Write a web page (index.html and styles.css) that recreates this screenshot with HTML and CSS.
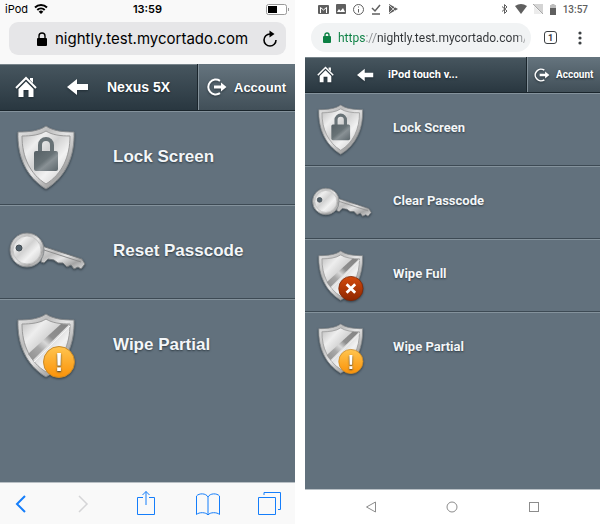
FILE: index.html
```html
<!DOCTYPE html>
<html lang="en">
<head>
    <meta charset="utf-8">
    <title>Device Actions</title>
    <link rel="stylesheet" href="styles.css">
</head>
<body>
    <!-- Shared icons -->
    <svg class="sprite" aria-hidden="true">
        <defs>
            <linearGradient id="rim" x1="0" y1="0" x2="1" y2="1">
                <stop offset="0" stop-color="#e8e8e8"/>
                <stop offset="0.3" stop-color="#bdbdbd"/>
                <stop offset="0.5" stop-color="#e6e6e6"/>
                <stop offset="0.75" stop-color="#a5a5a5"/>
                <stop offset="1" stop-color="#e0e0e0"/>
            </linearGradient>
            <linearGradient id="steel" x1="0" y1="0" x2="1" y2="1">
                <stop offset="0" stop-color="#bcbcbc"/>
                <stop offset="0.25" stop-color="#eeeeee"/>
                <stop offset="0.45" stop-color="#d2d2d2"/>
                <stop offset="0.65" stop-color="#f2f2f2"/>
                <stop offset="1" stop-color="#c4c4c4"/>
            </linearGradient>
            <linearGradient id="slash" x1="1" y1="0" x2="0" y2="1">
                <stop offset="0" stop-color="#858585"/>
                <stop offset="0.4" stop-color="#8f8f8f"/>
                <stop offset="0.55" stop-color="#d8d8d8"/>
                <stop offset="0.7" stop-color="#a8a8a8"/>
                <stop offset="1" stop-color="#8f8f8f"/>
            </linearGradient>
            <linearGradient id="padlock" x1="0" y1="0" x2="1" y2="1">
                <stop offset="0" stop-color="#566065"/>
                <stop offset="0.45" stop-color="#687276"/>
                <stop offset="0.6" stop-color="#899195"/>
                <stop offset="1" stop-color="#5c666b"/>
            </linearGradient>
            <linearGradient id="orange" x1="0" y1="0" x2="0" y2="1">
                <stop offset="0" stop-color="#ffc550"/>
                <stop offset="1" stop-color="#fb9208"/>
            </linearGradient>
            <linearGradient id="red" x1="0" y1="0" x2="0" y2="1">
                <stop offset="0" stop-color="#d34b0c"/>
                <stop offset="1" stop-color="#8e2600"/>
            </linearGradient>
        </defs>

        <symbol id="shield" viewBox="0 0 78 66">
            <path d="M38 1C31 6 21 7 10 7C9 31 18 52 38 64C58 52 67 31 66 7C55 7 45 6 38 1Z" fill="url(#rim)" stroke="#85898c"/>
            <path d="M38 6C32 10 23 11 14 11C14 32 22 49 38 59C54 49 62 32 62 11C53 11 44 10 38 6Z" fill="url(#steel)" stroke="#9a9a9a"/>
        </symbol>

        <symbol id="lock" viewBox="0 0 78 66">
            <use href="#shield"/>
            <path d="M32 27V20a6 6 0 0 1 12 0v7" fill="none" stroke="#687276" stroke-width="4"/>
            <rect x="26" y="26" width="24" height="20" rx="2" fill="url(#padlock)"/>
        </symbol>

        <symbol id="wipe" viewBox="0 0 78 66">
            <use href="#shield"/>
            <path d="M53 11L61 11.500L25 47L20 41Z" fill="url(#slash)"/>
            <path d="M62 13L26 49" stroke="#f4f4f4" fill="none"/>
        </symbol>

        <symbol id="wipe-partial" viewBox="0 0 78 66">
            <use href="#wipe"/>
            <circle cx="51" cy="49" r="15.500" fill="url(#orange)" stroke="#c98a2a"/>
        </symbol>

        <symbol id="wipe-full" viewBox="0 0 78 66">
            <use href="#wipe"/>
            <circle cx="51" cy="49" r="15.500" fill="url(#red)" stroke="#7c2808"/>
            <path d="M45.500 43.500L56.500 54.500M56.500 43.500L45.500 54.500" stroke="#ffffff" stroke-width="3.500" fill="none"/>
        </symbol>

        <symbol id="key" viewBox="0 0 78 66">
            <path d="M34 27L74 40L77 45L73 50L70 48L66 50L63 46L59 48L55 44L50 44L46 41L40 40L36 44L33 43Z" fill="url(#rim)" stroke="#74797c"/>
            <path d="M36 31L73 43" stroke="#8d8d8d" fill="none"/>
            <circle cx="19" cy="31" r="17" fill="url(#rim)" stroke="#85898c"/>
            <circle cx="19" cy="31" r="14" fill="url(#steel)" stroke="#c4c4c4"/>
            <circle cx="11" cy="29" r="3" fill="#52616c" stroke="#444d53"/>
        </symbol>

        <symbol id="home" viewBox="0 0 22 22">
            <path d="M1 12L11 2L21 12" fill="none" stroke="#ffffff" stroke-width="2"/>
            <path d="M15 2h3v5l-3-3z" fill="#ffffff"/>
            <path d="M11 5.500L18.500 13V21H13.500V14H8.500V21H3.500V13Z" fill="#ffffff"/>
        </symbol>

        <symbol id="arrow" viewBox="0 0 22 18">
            <path d="M0 9L10 1V6H21V12H10V17Z" fill="#ffffff"/>
        </symbol>

        <symbol id="exit" viewBox="0 0 20 18">
            <path d="M13 2.800A7.500 7.500 0 1 0 13 15.200" fill="none" stroke="#ffffff" stroke-width="2"/>
            <path d="M7 7.500H14V4.500L19.500 9L14 13.500V10.500H7Z" fill="#ffffff"/>
        </symbol>
    </svg>

    <main class="phones">
        <section class="phone ios">
            <div class="status">
                <div class="status-side">
                    <span>iPod</span>
                    <svg width="14" height="10" viewBox="0 0 14 10">
                        <path d="M1 3.500a8.500 8.500 0 0 1 12 0M3.300 6a5.300 5.300 0 0 1 7.400 0" fill="none" stroke="#000" stroke-width="2"/>
                        <path d="M7 10L4.700 7.700a3.300 3.300 0 0 1 4.600 0z"/>
                    </svg>
                </div>
                <strong>13:59</strong>
                <div class="status-side end">
                    <svg width="24" height="11" viewBox="0 0 24 11">
                        <rect x="0.500" y="0.500" width="20" height="10" rx="2" fill="#fff" stroke="#999"/>
                        <rect x="2" y="2" width="9" height="7"/>
                        <path d="M22.500 4v3" stroke="#999"/>
                    </svg>
                </div>
            </div>
            <div class="browser">
                <div class="address">
                    <svg width="10" height="14" viewBox="0 0 10 14">
                        <path d="M2 7V4a3 3 0 0 1 6 0v3" fill="none" stroke="#000" stroke-width="1.400"/>
                        <rect y="6" width="10" height="8" rx="1"/>
                    </svg>
                    <input type="text" value="nightly.test.mycortado.com" aria-label="Address">
                    <button type="button" aria-label="Reload">
                        <svg width="16" height="18" viewBox="0 0 16 18">
                            <path d="M9.500 4H8A6 6 0 1 0 14 10" fill="none" stroke="#000" stroke-width="1.600"/>
                            <path d="M7.500 0.500L12.500 4L7.500 7.500Z"/>
                        </svg>
                    </button>
                </div>
            </div>
            <header class="header">
                <a href="#" class="home" aria-label="Home"><svg><use href="#home"/></svg></a>
                <a href="#" class="back" aria-label="Back"><svg><use href="#arrow"/></svg></a>
                <h1>Nexus 5X</h1>
                <a href="#" class="account"><svg><use href="#exit"/></svg>Account</a>
            </header>
            <nav class="actions">
                <a href="#"><svg viewBox="0 0 78 66"><use href="#lock"/></svg><span>Lock Screen</span></a>
                <a href="#"><svg viewBox="0 0 78 66"><use href="#key"/></svg><span>Reset Passcode</span></a>
                <a href="#"><svg viewBox="0 0 78 66"><use href="#wipe-partial"/><text x="51" y="58">!</text></svg><span>Wipe Partial</span></a>
            </nav>
            <div class="toolbar">
                <button type="button" aria-label="Previous page">
                    <svg width="24" height="26" viewBox="0 0 24 26"><path d="M16 6L8 14L16 22" stroke-width="2"/></svg>
                </button>
                <button type="button" aria-label="Next page" disabled>
                    <svg width="24" height="26" viewBox="0 0 24 26"><path d="M8 6L16 14L8 22" stroke-width="1.500"/></svg>
                </button>
                <button type="button" aria-label="Share">
                    <svg width="24" height="26" viewBox="0 0 24 26"><path d="M9 7.500H3.500V24.500H20.500V7.500H15M12 15V1.500M8.500 5L12 1.500L15.500 5"/></svg>
                </button>
                <button type="button" aria-label="Bookmarks">
                    <svg width="24" height="26" viewBox="0 0 24 26"><path d="M12 7C10 3 3 3 0.500 6V24.500C3 22 10 22 12 25C14 22 21 22 23.500 24.500V6C21 3 14 3 12 7V25"/></svg>
                </button>
                <button type="button" aria-label="Tabs">
                    <svg width="24" height="26" viewBox="0 0 24 26"><path d="M0.500 7.500h17v17h-17zM6 5V2.500H22.500V19.500H20"/></svg>
                </button>
            </div>
        </section>

        <section class="phone android">
            <div class="status">
                <div class="status-side">
                    <svg width="11" height="10" viewBox="0 0 11 10">
                        <rect y="1" width="11" height="9" rx="1" fill="#5f5f5f"/>
                        <path d="M2.500 9V3.500L5.500 6L8.500 3.500V9" fill="none" stroke="#fff"/>
                    </svg>
                    <svg width="10" height="10" viewBox="0 0 10 10">
                        <rect width="10" height="10" rx="1" fill="#5f5f5f"/>
                        <path d="M1 8L3 5L4.500 7L7 4L9 8Z" fill="#fff"/>
                    </svg>
                    <svg width="11" height="11" viewBox="0 0 11 11">
                        <circle cx="5.500" cy="5.500" r="5" fill="none" stroke="#5f5f5f"/>
                        <path d="M5.500 2.500v1M5.500 5v3.500" stroke="#5f5f5f"/>
                    </svg>
                    <svg width="10" height="11" viewBox="0 0 10 11">
                        <path d="M1 4L4 7L9 1M1 10H9" fill="none" stroke="#5f5f5f" stroke-width="1.500"/>
                    </svg>
                    <svg width="11" height="10" viewBox="0 0 11 10">
                        <path d="M1 0L10 5L1 10Z" fill="#5f5f5f"/>
                        <path d="M1 1L7 7M1 9L7 3" stroke="#fff" stroke-width="0.700"/>
                    </svg>
                </div>
                <div class="status-side end">
                    <svg width="8" height="12" viewBox="0 0 8 12">
                        <path d="M1 3.500L6 8L3.500 10.500V1.500L6 4L1 8.500" fill="none" stroke="#5f5f5f"/>
                    </svg>
                    <svg width="12" height="10" viewBox="0 0 12 10"><path d="M0 2Q6 -2 12 2L6 10Z" fill="#5f5f5f"/></svg>
                    <svg width="10" height="10" viewBox="0 0 10 10">
                        <path d="M1 0H10V10L1 1Z" fill="#d4d4d4"/>
                        <path d="M0 1L9 10H1V2" fill="#ececec"/>
                        <path d="M0 0L10 10" stroke="#a8a8a8"/>
                    </svg>
                    <svg width="8" height="11" viewBox="0 0 8 11">
                        <path d="M2.500 0h3v1H7v3H1V1h1.500z" fill="#bdbdbd"/>
                        <rect x="1" y="4" width="6" height="7" fill="#5f5f5f"/>
                    </svg>
                    <span>13:57</span>
                </div>
            </div>
            <div class="browser">
                <div class="address">
                    <svg width="8" height="11" viewBox="0 0 8 11">
                        <path d="M2 5V3a2 2 0 0 1 4 0v2" fill="none" stroke="#0b8043" stroke-width="1.400"/>
                        <rect y="4" width="8" height="7" rx="1" fill="#0b8043"/>
                    </svg>
                    <input type="text" value="https://nightly.test.mycortado.com/u" aria-label="Address">
                </div>
                <button type="button" class="tabs">1</button>
                <button type="button" class="menu" aria-label="Menu">
                    <svg width="4" height="14" viewBox="0 0 4 14" fill="#3c4043">
                        <circle cx="2" cy="2" r="1.600"/><circle cx="2" cy="7" r="1.600"/><circle cx="2" cy="12" r="1.600"/>
                    </svg>
                </button>
            </div>
            <header class="header">
                <a href="#" class="home" aria-label="Home"><svg><use href="#home"/></svg></a>
                <a href="#" class="back" aria-label="Back"><svg><use href="#arrow"/></svg></a>
                <h1>iPod touch v...</h1>
                <a href="#" class="account"><svg><use href="#exit"/></svg>Account</a>
            </header>
            <nav class="actions">
                <a href="#"><svg viewBox="0 0 78 66"><use href="#lock"/></svg><span>Lock Screen</span></a>
                <a href="#"><svg viewBox="0 0 78 66"><use href="#key"/></svg><span>Clear Passcode</span></a>
                <a href="#"><svg viewBox="0 0 78 66"><use href="#wipe-full"/></svg><span>Wipe Full</span></a>
                <a href="#"><svg viewBox="0 0 78 66"><use href="#wipe-partial"/><text x="51" y="58">!</text></svg><span>Wipe Partial</span></a>
            </nav>
            <div class="toolbar">
                <button type="button" aria-label="Back">
                    <svg width="12" height="12" viewBox="0 0 12 12"><path d="M10.500 1V11L1.500 6Z"/></svg>
                </button>
                <button type="button" aria-label="Home">
                    <svg width="12" height="12" viewBox="0 0 12 12"><circle cx="6" cy="6" r="5"/></svg>
                </button>
                <button type="button" aria-label="Recent apps">
                    <svg width="12" height="12" viewBox="0 0 12 12"><rect x="1.500" y="1.500" width="9" height="9"/></svg>
                </button>
            </div>
        </section>
    </main>
</body>
</html>
```

FILE: styles.css
```css
* {
    box-sizing: border-box;
}
body {
    margin: 0;
    background: #ffffff;
}
.sprite {
    position: absolute;
    width: 0;
    height: 0;
}
.phones {
    display: grid;
    grid-template-columns: 1fr 1fr;
    gap: 10px;
    min-height: 100vh;
}
.phone {
    display: flex;
    flex-direction: column;
    min-width: 0;
}
.ios {
    font-family: "Liberation Sans", Arial, sans-serif;
    background: #f9f9f9;
}
.android {
    font-family: Roboto, sans-serif;
}
svg {
    flex: none;
}
button {
    display: flex;
    align-items: center;
    justify-content: center;
    padding: 0;
    border: none;
    background: none;
    cursor: pointer;
}
a {
    color: #ffffff;
    text-decoration: none;
}

/* Status bar */
.status {
    display: flex;
    align-items: center;
    height: 18px;
    font-size: 11px;
}
.status-side {
    display: flex;
    flex: 1;
    align-items: center;
    gap: 6px;
}
.end {
    justify-content: flex-end;
}
.ios .status {
    padding: 0 5px;
    font-family: Inter, sans-serif;
}
.ios .status strong {
    font-weight: 600;
}
.android .status {
    padding: 0 12px 0 13px;
    font-size: 10px;
    font-weight: 500;
    color: #5f5f5f;
}
.android .status-side {
    gap: 7px;
}
.android .end {
    gap: 6px;
}

/* Browser bar */
.browser {
    display: flex;
}
.address {
    display: flex;
    flex: 1;
    align-items: center;
    min-width: 0;
}
.address input {
    flex: 1;
    min-width: 0;
    padding: 0;
    border: none;
    outline: none;
    background: none;
}
.ios .browser {
    padding: 4px 9px 9px;
}
.ios .address {
    height: 33px;
    padding: 0 8px 0 28px;
    gap: 8px;
    border-radius: 9px;
    background: #e6e6e8;
}
.ios .address input {
    height: 24px;
    font: 15px Inter, sans-serif;
}
.android .browser {
    align-items: center;
    padding: 5px 18px 5px 6px;
    gap: 13px;
}
.android .address {
    height: 29px;
    padding: 0 6px 0 12px;
    gap: 7px;
    border-radius: 15px;
    background: #f1f3f4;
}
.android .address input {
    height: 20px;
    font: 12px Roboto, sans-serif;
    background: linear-gradient(90deg, #0b8043 27px, #8a8d90 27px, #8a8d90 38px, #303336 38px, #303336 180px, #8a8d90 180px, #a5a7a9 100%);
    background-clip: text;
    -webkit-background-clip: text;
    color: transparent;
}
.tabs {
    width: 13px;
    height: 13px;
    border: 1px solid #3c4043;
    border-radius: 3px;
    font: bold 9px Roboto, sans-serif;
    color: #3c4043;
}
.menu {
    margin-left: 8px;
}

/* Page header */
.header {
    display: flex;
    align-items: center;
    border-bottom: 1px solid #1a252c;
    background: linear-gradient(#47565f, #293740);
    box-shadow: inset 0 1px #78848b;
    text-shadow: 0 1px 2px #1a252c;
}
.header svg,
.actions svg {
    display: block;
    filter: drop-shadow(0 1px 1px rgba(20, 30, 36, 0.6));
}
.header h1 {
    flex: 1;
    margin: 0;
    overflow: hidden;
    white-space: nowrap;
    color: #ffffff;
}
.account {
    display: flex;
    align-items: center;
    align-self: stretch;
    border-left: 1px solid #84929b;
    background: linear-gradient(#65747e, #414f58);
    box-shadow: -1px 0 #1a252c;
    font-weight: bold;
}
.ios .header {
    height: 47px;
    padding-left: 15px;
}
.ios .home svg {
    width: 22px;
    height: 22px;
}
.ios .back {
    margin: 0 18px 0 30px;
}
.ios .back svg {
    width: 22px;
    height: 18px;
}
.ios .header h1 {
    font-size: 14px;
}
.ios .account {
    width: 97px;
    padding-left: 8px;
    gap: 7px;
    font-size: 13px;
}
.ios .account svg {
    width: 20px;
    height: 18px;
}
.android .header {
    height: 36px;
    padding-left: 12px;
}
.android .home svg {
    width: 17px;
    height: 17px;
}
.android .back {
    margin: 0 14px 0 23px;
}
.android .back svg {
    width: 17px;
    height: 14px;
}
.android .header h1 {
    font-size: 11px;
}
.android .account {
    width: 73px;
    padding-left: 6px;
    gap: 6px;
    font-size: 10px;
}
.android .account svg {
    width: 16px;
    height: 14px;
}

/* Action list */
.actions {
    flex: 1;
    background: #62717d;
    border-bottom: 1px solid #b9c0c5;
}
.actions a {
    display: flex;
    align-items: center;
    border-top: 1px solid #84929c;
    border-bottom: 1px solid #3d4a54;
    font-weight: bold;
    color: #f3f6f8;
    text-shadow: 0 1px 2px #2c3840;
}
.actions a:last-child {
    border-bottom-color: transparent;
}
.actions text {
    font: bold 26px "Liberation Sans", Arial, sans-serif;
    fill: #ffffff;
    text-anchor: middle;
}
.ios .actions a {
    height: 94px;
    padding-left: 8px;
    gap: 27px;
    font-size: 17px;
}
.ios .actions span {
    padding-bottom: 2px;
}
.ios .actions svg {
    width: 78px;
    height: 66px;
}
.android .actions a {
    height: 73px;
    padding-left: 6px;
    gap: 21px;
    font-size: 13px;
}
.android .actions span {
    padding-bottom: 4px;
}
.android .actions svg {
    width: 61px;
    height: 52px;
}

/* Bottom toolbar */
.toolbar {
    display: flex;
    align-items: center;
    fill: none;
}
.ios .toolbar {
    justify-content: space-between;
    height: 41px;
    padding: 0 13px 2px 9px;
    stroke: #157efb;
}
.ios .toolbar button:disabled {
    stroke: #d5d5d7;
}
.android .toolbar {
    justify-content: space-around;
    height: 34px;
    padding: 0 25px;
    stroke: #8c8c8c;
}
```
